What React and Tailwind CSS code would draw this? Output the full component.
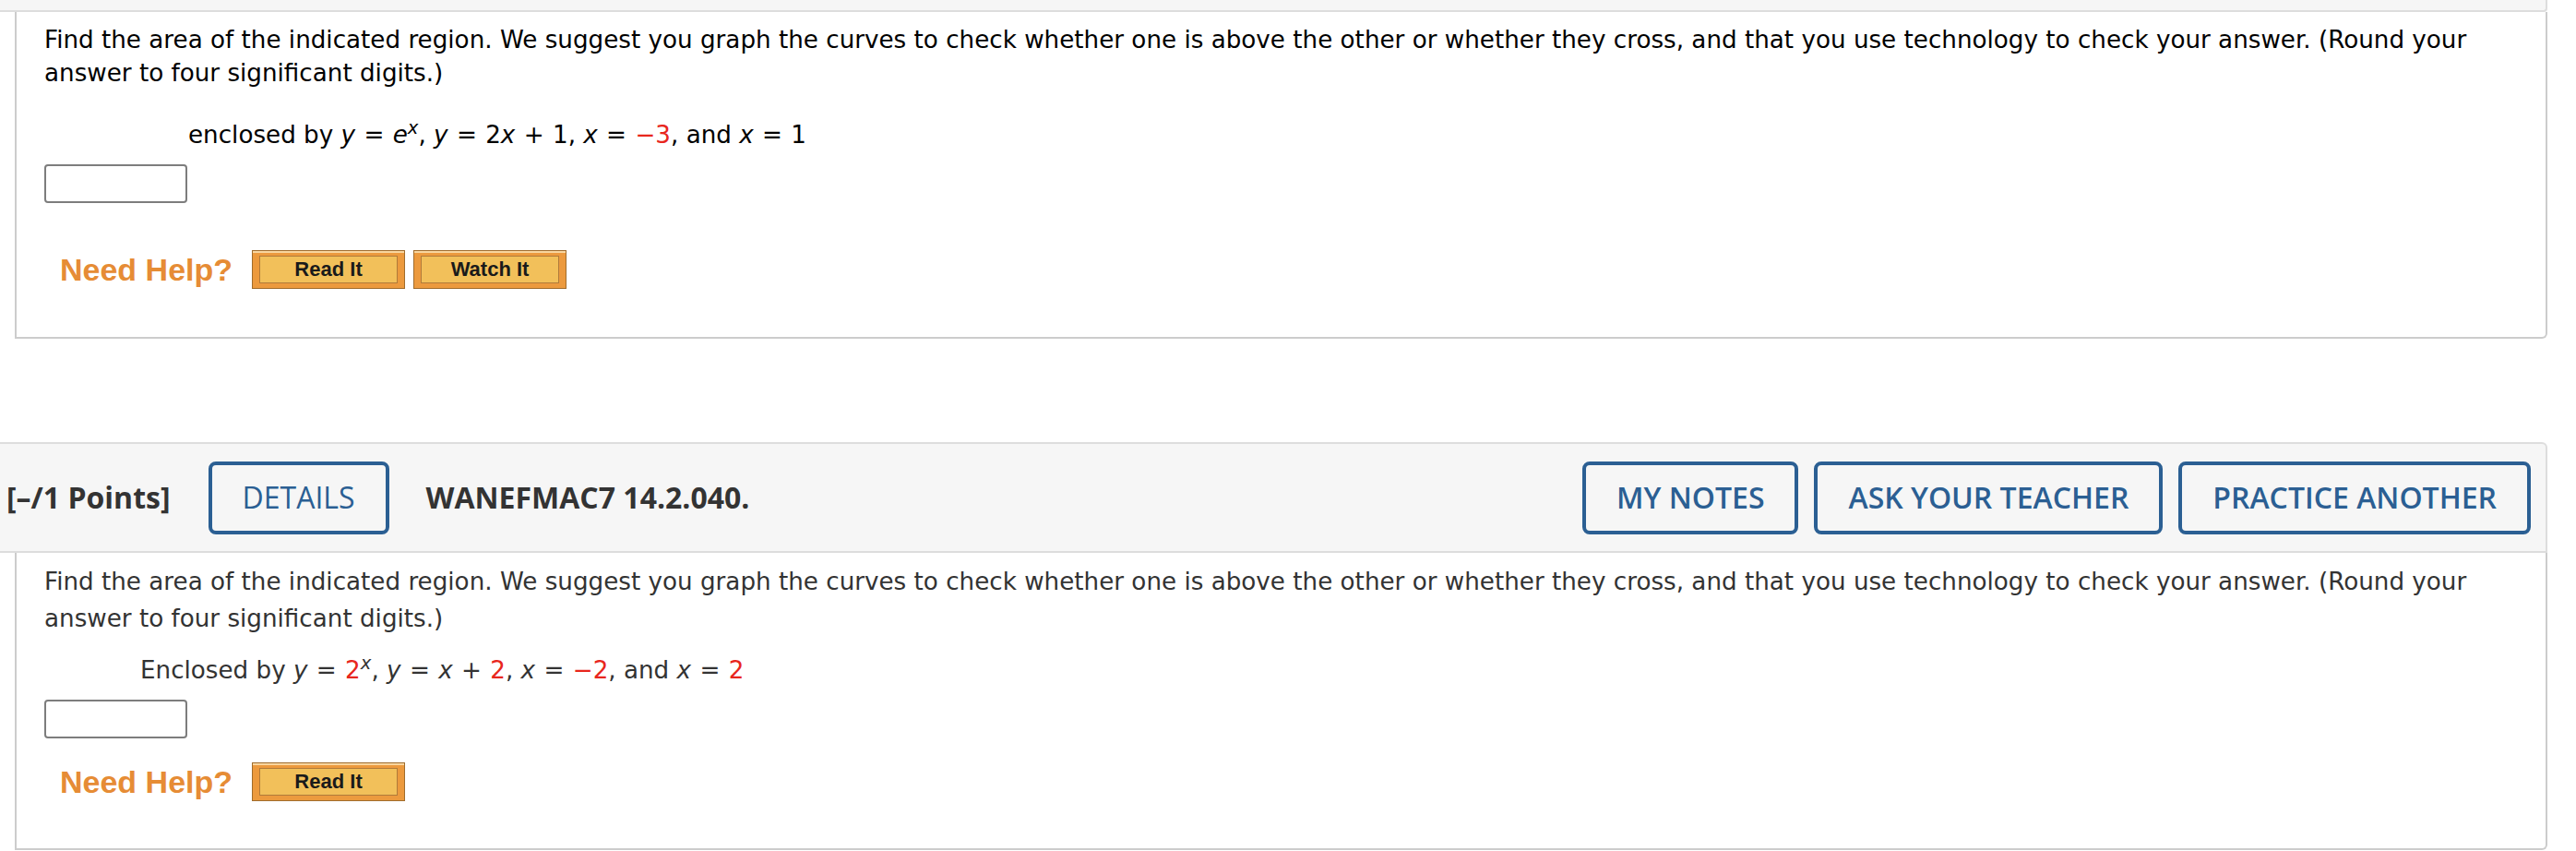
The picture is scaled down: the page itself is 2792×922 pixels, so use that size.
import React from 'react'

const body = "font-['DejaVu_Sans','Verdana',sans-serif] text-[26.2px]"

function HelpButton({ label }) {
  return (
    <div className="w-[166px] h-[42px] border border-[#a06c2c] bg-[#ec9a3e] shadow-[inset_0_2px_0_#f8d6a0] px-[7px] pt-[5px] pb-[5px]">
      <div className="h-full border border-[#b07a3a] bg-[#f2c05a] flex items-center justify-center">
        <span className="font-['Liberation_Sans',Arial,sans-serif] font-bold text-[22px] leading-none text-[#1a1a1a]">
          {label}
        </span>
      </div>
    </div>
  )
}

function NeedHelp({ buttons }) {
  return (
    <div className="flex items-center pl-[17px]">
      <span className="font-['Liberation_Sans',Arial,sans-serif] font-bold text-[34px] leading-none text-[#e68c35] mr-[21px]">
        Need Help?
      </span>
      <div className="flex gap-[9px]">
        {buttons.map(b => (
          <HelpButton key={b} label={b} />
        ))}
      </div>
    </div>
  )
}

function AnswerBox() {
  return <div className="w-[155px] h-[42px] border-2 border-[#7d7d7d] rounded-[4px] bg-white" />
}

function OutlineButton({ children, weight = 'font-semibold' }) {
  return (
    <div className={`h-[79px] px-[33px] border-4 border-[#2b5f93] rounded-[8px] flex items-center text-[#2b5f93] text-[32px] ${weight}`}>
      {children}
    </div>
  )
}

const Red = ({ children }) => <span className="text-[#e8261d]">{children}</span>
const Op = ({ children }) => <span className="mx-[1px]">{children}</span>

export default function App() {
  return (
    <div className="w-[2761px] bg-white">
      {/* tail of previous question header */}
      <div className="h-[13px] bg-[#f6f6f6] border-b-2 border-r-2 border-[#dddddd] rounded-br-[4px]" />

      {/* Question 1 body */}
      <div className={`ml-[16px] border-x-2 border-b-2 border-[#cccccc] rounded-br-[6px] pl-[30px] pr-[16px] pt-[12px] pb-[52px] text-black ${body}`}>
        <p className="leading-[36px]">
          Find the area of the indicated region. We suggest you graph the curves to check whether one is above the other or whether they cross, and that you use technology to check your answer. (Round your
          <br />
          answer to four significant digits.)
        </p>
        <p className="mt-[31px] pl-[156px] leading-[36px]">
          enclosed by <i>y</i> <Op>=</Op> <i>e</i><sup><i>x</i></sup>, <i>y</i> <Op>=</Op> 2<i>x</i> <Op>+</Op> 1, <i>x</i> <Op>=</Op> <Red>−3</Red>, and <i>x</i> <Op>=</Op> 1
        </p>
        <div className="mt-[14px]">
          <AnswerBox />
        </div>
        <div className="mt-[51px]">
          <NeedHelp buttons={['Read It', 'Watch It']} />
        </div>
      </div>

      {/* Question 2 header */}
      <div className="mt-[112px] h-[120px] bg-[#f6f6f6] border-y-2 border-r-2 border-[#dddddd] rounded-tr-[6px] flex items-center pl-[7px] pr-[16px] font-['Open_Sans',sans-serif]">
        <span className="text-[32px] font-bold text-[#333333]">[–/1 Points]</span>
        <div className="ml-[41px]">
          <OutlineButton weight="font-medium">DETAILS</OutlineButton>
        </div>
        <span className="ml-[40px] text-[32px] font-bold text-[#333333]">WANEFMAC7 14.2.040.</span>
        <div className="ml-auto flex gap-[17px]">
          <OutlineButton>MY NOTES</OutlineButton>
          <OutlineButton>ASK YOUR TEACHER</OutlineButton>
          <OutlineButton>PRACTICE ANOTHER</OutlineButton>
        </div>
      </div>

      {/* Question 2 body */}
      <div className={`ml-[16px] border-x-2 border-b-2 border-[#cccccc] rounded-br-[6px] pl-[30px] pr-[16px] pt-[11px] pb-[51px] text-[#333333] ${body}`}>
        <p className="leading-[40px]">
          Find the area of the indicated region. We suggest you graph the curves to check whether one is above the other or whether they cross, and that you use technology to check your answer. (Round your
          <br />
          answer to four significant digits.)
        </p>
        <p className="mt-[16px] pl-[104px] leading-[40px]">
          Enclosed by <i>y</i> <Op>=</Op> <Red>2</Red><sup><i>x</i></sup>, <i>y</i> <Op>=</Op> <i>x</i> <Op>+</Op> <Red>2</Red>, <i>x</i> <Op>=</Op> <Red>−2</Red>, and <i>x</i> <Op>=</Op> <Red>2</Red>
        </p>
        <div className="mt-[12px]">
          <AnswerBox />
        </div>
        <div className="mt-[26px]">
          <NeedHelp buttons={['Read It']} />
        </div>
      </div>
    </div>
  )
}
